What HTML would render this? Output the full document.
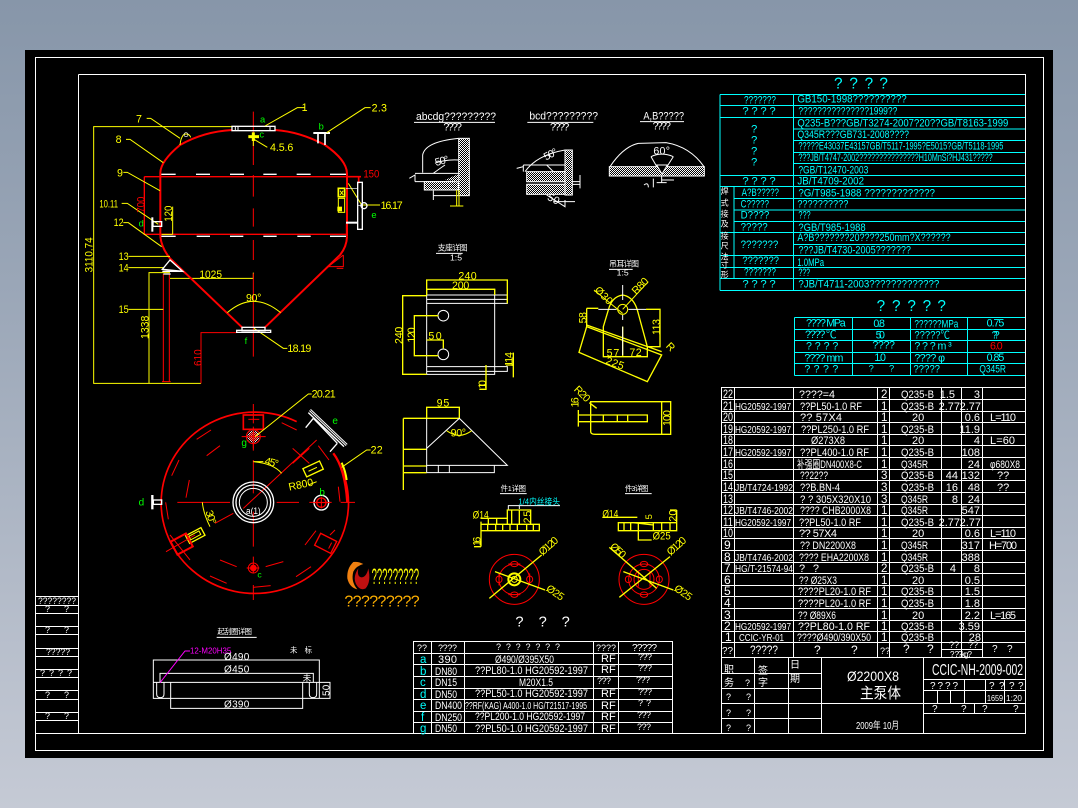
<!DOCTYPE html>
<html><head><meta charset="utf-8"><style>
html,body{margin:0;padding:0;width:1078px;height:808px;overflow:hidden;background:linear-gradient(180deg,#8796a9 0%,#9aa6b7 35%,#c5cad5 100%)}
svg{position:absolute;left:0;top:0}
text{font-family:"Liberation Sans","Noto Sans CJK SC",sans-serif;stroke:none}
.l{fill:none;shape-rendering:crispEdges}
.W{stroke:#fff}.Y{stroke:#ff0}.R{stroke:#f00}.C{stroke:#0ff}.M{stroke:#f0f}
.tw{fill:#fff}.ty{fill:#ff0}.tr{fill:#f00}.tc{fill:#0ff}.tg{fill:#0f0}.tm{fill:#f0f}.to{fill:#ffb000}
.z{stroke-width:3}
.t{font-size:11px}
</style></head><body>
<svg width="1078" height="808" viewBox="0 0 1078 808" xmlns="http://www.w3.org/2000/svg">
<defs>
<pattern id="h" patternUnits="userSpaceOnUse" width="6" height="6"><rect width="6" height="6" fill="#000"/><rect width="3" height="3" fill="#fff"/><rect x="3" y="3" width="3" height="3" fill="#fff"/></pattern>
</defs>
<rect x="25" y="50" width="1028" height="708" fill="#000"/>
<!-- frames -->
<g class="l W" stroke-width="1">
<rect x="35.5" y="57.5" width="1008" height="693"/>
<path d="M78.5 74.5H1025.5V733.5H35.5M78.5 74.5V733.5"/>
<path d="M36 596.5H78M36 605.5H78M36 613.5H78M36 626.5H78M36 634.5H78M36 648.5H78M36 656.5H78M36 669.5H78M36 677.5H78M36 690.5H78M36 699.5H78M36 712.5H78M36 720.5H78"/>
</g>
<g class="tw" font-size="9">
<text x="38" y="604" textLength="38" lengthAdjust="spacingAndGlyphs">????????</text>
<text x="45" y="612">?</text><text x="64" y="612">?</text>
<text x="45" y="633">?</text><text x="64" y="633">?</text>
<text x="46" y="655" textLength="24" lengthAdjust="spacingAndGlyphs">?????</text>
<text x="40" y="676" textLength="32" lengthAdjust="spacing">????</text>
<text x="45" y="698">?</text><text x="64" y="698">?</text>
<text x="45" y="719">?</text><text x="64" y="719">?</text>
</g>

<!-- Main vessel : zoom 1 coords -->
<g transform="translate(0,40) scale(.33333)">
<g class="z" fill="none">
<path class="Y" d="M696 260H281V1030H603M447 1030V698H510M510 715H760V698" />
<path class="R" stroke-width="6" d="M481 590V400Q480 365 540 315Q610 275 696 270M825 270Q900 275 975 315Q1040 360 1041 400V590"/>
<path class="R" stroke-width="6" d="M481 590Q485 625 510 655L726 862M1041 590Q1040 620 1020 645L795 862"/>
<path class="R" stroke-width="4" d="M433 410H1040M433 410V583H1040M481 410V583M1040 410V583"/>
<path class="R" d="M1040 410H1083M1076 410V430M1040 550V583" stroke-width="5"/>
<path class="R" d="M760 215V375M760 405V470M760 505V560M760 600V660M760 700V950"/>
<path class="R" d="M490 702V1025M508 702V1025M486 1025H512M603 1030V878H710"/>
<path class="W" stroke-width="4" d="M484 403H527M588 403H630M690 403H732M790 403H830M890 403H932M990 403H1038M484 589H527M590 589H630M690 589H730M790 589H830M892 589H932M990 589H1038"/>
<rect class="W" x="696" y="259" width="129" height="13" stroke-width="4"/>
<path class="W" d="M706 260V272M714 260V272M810 260V272"/>
<path class="W" stroke-width="6" d="M940 279H990"/><path class="W" stroke-width="5" d="M954 279V310M975 279V315"/>
<path stroke="#ff0" d="M440 235H452L540 295M378 298H390L490 368M370 397H382L480 452M365 490H382L475 553M370 548H385L485 620M385 649H510M385 683H490M385 808H490"/>
<path class="Y" d="M795 258L892 203H915M980 278L1095 203H1112M762 298L802 322M762 865L850 925H862M1045 430L1085 495H1140"/>
<path class="Y" stroke-width="9" d="M745 290H777"/><path class="Y" stroke-width="9" d="M760 277V303"/><path class="Y" d="M760 303V318"/>
<path class="Y" d="M540 315Q542 295 550 285A14 14 0 0 1 572 292"/><circle class="W" cx="558" cy="284" r="6" stroke-width="2"/>
<path class="W" stroke-width="4" d="M510 660L487 688L548 694Z"/>
<path class="W" stroke-width="4" d="M487 694H548M490 702H512"/>
<path class="R" d="M1030 645L985 680H1030V645M1010 685H1030"/>
<path class="Y" d="M682 818Q760 750 842 818"/>
<rect class="W" x="726" y="862" width="69" height="10" stroke-width="4"/>
<rect class="W" x="710" y="871" width="102" height="6" stroke-width="4"/>
<rect class="W" x="1073" y="427" width="14" height="141" stroke-width="4"/>
<path class="W" stroke-width="2" d="M1073 497H1087M1038 445H1073"/>
<path class="W" stroke-width="6" d="M1038 548H1073"/>
<circle class="W" cx="1092" cy="497" r="9" stroke-width="4"/>
<rect class="Y" x="1015" y="445" width="19" height="25" stroke-width="5"/>
<path class="Y" d="M1020 452L1030 465M1030 452L1020 465" stroke-width="3"/>
<rect class="Y" x="1015" y="475" width="19" height="42" stroke-width="3"/>
<rect x="1012" y="500" width="14" height="14" fill="#ff0" stroke="none"/>
<rect class="W" x="459" y="545" width="26" height="14" stroke-width="4"/>
<path class="W" stroke-width="6" d="M457 532V575"/>
<path class="Y" d="M518 500V583M485 583H518"/>
</g>
<g class="ty" font-size="32">
<text x="408" y="247">7</text><text x="347" y="309">8</text><text x="351" y="409">9</text>
<text x="298" y="503" textLength="56" lengthAdjust="spacingAndGlyphs">10.11</text><text x="341" y="558" textLength="30" lengthAdjust="spacingAndGlyphs">12</text>
<text x="356" y="660" textLength="30" lengthAdjust="spacingAndGlyphs">13</text><text x="356" y="694" textLength="30" lengthAdjust="spacingAndGlyphs">14</text><text x="356" y="819" textLength="30" lengthAdjust="spacingAndGlyphs">15</text>
<text x="905" y="213">1</text><text x="1115" y="214" textLength="46">2.3</text><text x="810" y="333" textLength="70">4.5.6</text>
<text x="1142" y="507" textLength="66">16.17</text><text x="598" y="714" textLength="68" lengthAdjust="spacingAndGlyphs">1025</text>
<text x="738" y="784" textLength="46">90°</text><text x="862" y="936" textLength="72">18.19</text>
<text transform="translate(278,697) rotate(-90)" textLength="105" lengthAdjust="spacingAndGlyphs">3110.74</text>
<text transform="translate(445,897) rotate(-90)" textLength="70" lengthAdjust="spacingAndGlyphs">1338</text>
<text transform="translate(516,545) rotate(-90)" textLength="48" lengthAdjust="spacingAndGlyphs">120</text>
</g>
<g class="tr" font-size="32">
<text x="1090" y="412" textLength="48" lengthAdjust="spacingAndGlyphs">150</text>
<text transform="translate(604,978) rotate(-90)" textLength="50" lengthAdjust="spacingAndGlyphs">610</text>
<text transform="translate(434,518) rotate(-90)" textLength="48" lengthAdjust="spacingAndGlyphs">700</text>
</g>
<g class="tg" font-size="28">
<text x="780" y="248">a</text><text x="956" y="268">b</text><text x="778" y="292">c</text><text x="416" y="560">d</text><text x="1114" y="534">e</text><text x="734" y="912">f</text>
</g>
</g>

<!-- Top view : zoom 2 coords -->
<g transform="translate(100,380) scale(.33333)">
<g class="z" fill="none">
<path class="R" stroke-width="5" d="M590 125A281 272 0 1 0 700 220" />
<path class="R" stroke-width="7" d="M700 220Q735 265 742 367"/>
<path class="R" d="M232 367H390M530 367H597M628 367H695M722 367H765M460 72V130M460 180V212M460 240V340M460 395V500M460 530V580M460 615V660"/>
<path class="R" d="M290 178L333 150M320 227L360 197M215 287L237 240M258 353L268 300M197 367L205 418M360 540L410 560M330 588L380 610M497 560L550 545M588 590L633 560M615 495L648 452M690 465L705 450M715 320L720 365M655 197L687 240M545 128L590 150M578 205L628 250M628 205L578 250M460 622L512 617M345 430L400 400M430 385L650 180"/>
<rect class="R" x="430" y="105" width="60" height="43" stroke-width="5"/>
<path class="R" d="M445 118H478"/>
<circle class="R" cx="460" cy="170" r="21" stroke-width="3"/>
<circle cx="460" cy="170" r="18" fill="url(#h)" stroke="none" opacity=".9"/>
<circle cx="460" cy="170" r="14" fill="#f00" opacity=".55" stroke="none"/>
<path class="R" d="M425 170H497M460 140V205"/>
<path class="Y" d="M465 170L625 42H635M725 262L800 210H812M460 245H490M460 245Q520 250 545 280M307 367Q310 400 330 440M625 315L650 305"/>
<path class="Y" stroke-width="6" d="M725 248Q737 275 740 300"/>
<g transform="rotate(-25 640 267)"><rect class="Y" x="612" y="253" width="55" height="27" stroke-width="4"/><path class="Y" d="M624 267H652"/></g>
<g transform="rotate(-28 285 467)"><rect class="Y" x="260" y="454" width="52" height="26" stroke-width="4"/><rect class="Y" x="268" y="460" width="34" height="12"/></g>
<g transform="rotate(-28 245 490)"><rect class="R" x="218" y="470" width="52" height="44" stroke-width="6"/></g>
<path class="R" d="M198 515L285 465M210 465L270 540"/>
<g transform="rotate(27 677 490)"><rect class="R" x="650" y="470" width="54" height="40" stroke-width="4"/><path class="R" d="M692 480V500"/></g>
<circle class="W" cx="460" cy="367" r="61" stroke-width="4"/><circle class="W" cx="460" cy="367" r="52" stroke-width="4"/><circle class="W" cx="460" cy="367" r="42" stroke-width="3"/>
<circle class="W" cx="664" cy="368" r="22" stroke-width="4"/><circle class="R" cx="664" cy="368" r="14" stroke-width="4"/><path class="R" d="M640 368H690M664 350V385"/>
<circle class="R" cx="460" cy="564" r="15" stroke-width="3"/><circle cx="460" cy="564" r="10" fill="#f00" stroke="none"/><path class="R" d="M440 564H478"/>
<path class="W" stroke-width="7" d="M157 345V388"/><rect class="W" x="160" y="360" width="25" height="13" stroke-width="4"/>
<path class="W" stroke-width="4" d="M617 143L640 115M690 215L712 190"/>
<path class="W" stroke-width="4" d="M640 115L712 190M625 98L732 200"/>
<path class="W" stroke-width="8" d="M630 90L740 195"/>
<path stroke="#000" stroke-width="2" d="M630 90L740 195"/>
</g>
<text x="438" y="402" class="tw" font-size="27" textLength="44" lengthAdjust="spacingAndGlyphs">a(1)</text>
<g class="ty" font-size="32">
<text x="635" y="53" textLength="72">20.21</text><text x="812" y="221" textLength="36">22</text>
<text transform="translate(492,252) rotate(15)" textLength="42">45°</text>
<text transform="translate(568,332) rotate(-12)" textLength="75" lengthAdjust="spacingAndGlyphs">R800</text>
<text transform="translate(316,395) rotate(72)" textLength="42">30°</text>
</g>
<g class="tg" font-size="30"><text x="424" y="198">g</text><text x="697" y="132">e</text><text x="658" y="347">b</text><text x="116" y="377">d</text><text x="472" y="592" font-size="26">c</text></g>
<path d="M760 546Q740 565 742 595Q748 622 772 628Q752 605 760 575Q768 558 790 552Q775 544 760 546Z" fill="#f08010"/>
<path d="M805 565Q800 590 785 592Q770 590 775 565Q758 590 768 612Q780 634 797 625Q814 605 805 565Z" fill="#c01010"/>
<text x="815" y="612" class="ty" font-size="66" textLength="142" lengthAdjust="spacingAndGlyphs">?????????</text>
<text x="733" y="680" class="to" font-size="48" textLength="226" lengthAdjust="spacing">?????????</text>
</g>

<!-- Details : zoom 3 coords -->
<g transform="translate(390,100) scale(.33333)">
<g class="z" fill="none">
<path class="W" d="M72 67H315M412 67H610M750 65H882M138 460H218M657 508H728"/>
<path class="W" d="M98 218V165Q105 125 205 115M75 220H205M75 245H205M58 235L75 225V245M130 220Q150 205 165 195M135 190Q165 178 205 180M130 272V300M130 287H205"/>
<rect x="206" y="115" width="32" height="172" fill="url(#h)" stroke="#fff"/>
<rect x="103" y="245" width="102" height="25" fill="url(#h)" stroke="#fff"/>
<path d="M165 240L205 222V245Z" fill="url(#h)"/>
<path class="Y" d="M200 270V318M207 270V318M180 318H220"/>
<path class="W" d="M405 215Q440 165 525 150M400 195V215M380 205L400 200M400 195H525M410 245H570M410 253H570M570 225V265M470 195L490 215H525M470 285L525 320V300M490 305H555"/>
<rect x="525" y="150" width="22" height="135" fill="url(#h)" stroke="#fff"/>
<rect x="410" y="215" width="115" height="30" fill="url(#h)" stroke="#fff"/>
<rect x="410" y="253" width="115" height="30" fill="url(#h)" stroke="#fff"/>
<path class="W" d="M660 200Q700 140 745 130L828 128Q900 140 942 200M783 170L815 225L850 170M783 170Q815 155 850 170M815 228V248M800 248H830M815 240H852M762 255Q775 245 775 262M790 236V262"/>
<rect x="658" y="200" width="285" height="28" fill="url(#h)" stroke="#fff"/>
<path d="M800 195H832L816 222Z" fill="#000" stroke="#fff"/>
<!-- support -->
<path class="W" d="M110 568H314V823H110ZM110 585H352V610H110M110 598H352M110 800H352V814H110M110 814H314"/>
<circle class="W" cx="160" cy="647" r="16"/><circle class="W" cx="160" cy="763" r="16"/>
<path class="Y" stroke-width="4" d="M110 585V540H352V610M110 568H314V585M110 587H38V823H110M145 647H73V767H145M110 720H160V745M370 758V832M350 795H370M288 795V868M268 868H290"/>
<!-- lug -->
<path class="Y" stroke-width="4" d="M640 770V680L655 630Q665 590 698 585Q730 590 742 630L772 740V770ZM590 680L815 765L772 845L567 757ZM590 625H625M590 625V680M768 628H810V740H770M590 675L815 755M698 680V770M640 770H772"/>
<circle class="Y" cx="698" cy="628" r="15" stroke-width="3"/>
<path class="Y" d="M612 570L698 640M775 545L698 628"/>
<path class="W" d="M698 555V600M698 645V660M698 680V765M625 628H680M715 628H768"/>
</g>
<g class="tw" font-size="32">
<text x="78" y="60" textLength="240" lengthAdjust="spacingAndGlyphs">abcdg?????????</text><text x="160" y="92" textLength="56">????</text>
<text x="418" y="59" textLength="206" lengthAdjust="spacingAndGlyphs">bcd?????????</text><text x="480" y="92" textLength="58">????</text>
<text x="760" y="59" textLength="122" lengthAdjust="spacingAndGlyphs">A,B?????</text><text x="788" y="88" textLength="55">????</text>
<text transform="translate(138,198) rotate(-15)" textLength="42">50°</text>
<text transform="translate(468,182) rotate(-28)" textLength="42">50°</text>
<text transform="translate(470,298) rotate(28)" textLength="36">50</text>
<text x="790" y="163" textLength="50">60°</text>
<text x="143" y="452" font-size="24" textLength="90">支座详图</text><text x="180" y="482" font-size="26">1:5</text>
<text x="657" y="500" font-size="24" textLength="90">吊耳详图</text><text x="680" y="526" font-size="26">1:5</text>
</g>
<g class="ty" font-size="32">
<text x="205" y="538" textLength="55">240</text><text x="186" y="567" textLength="52">200</text><text x="115" y="719" textLength="40">50</text>
<text transform="translate(38,732) rotate(-90)" textLength="52">240</text><text transform="translate(75,728) rotate(-90)" textLength="46">120</text>
<text transform="translate(368,800) rotate(-90)" textLength="44">114</text><text transform="translate(288,866) rotate(-90)" textLength="26">10</text>
<text x="650" y="769" textLength="38">57</text><text x="718" y="768" textLength="37">72</text>
<text transform="translate(645,790) rotate(20)" textLength="56">225</text>
<text transform="translate(590,670) rotate(-90)" textLength="34">58</text><text transform="translate(810,705) rotate(-90)" textLength="48">113</text>
<text transform="translate(612,572) rotate(45)" textLength="62">Ø30</text><text transform="translate(738,585) rotate(-45)" textLength="56">R80</text>
<text transform="translate(826,740) rotate(45)">R</text>
<text transform="translate(550,870) rotate(45)" textLength="54">R20</text>
</g>
</g>

<!-- Lower details : zoom 7 coords -->
<g transform="translate(400,390) scale(.33333)">
<g class="z" fill="none">
<path class="Y" stroke-width="4" d="M80 85V52H178V85M10 85H178M10 178H80M10 228H80M10 248H80M10 85V300"/>
<path class="W" stroke-width="3" d="M80 85V248M80 175L178 85L322 226H80M80 248H283V226M115 226V248M148 226V248"/>
<path class="Y" d="M140 122Q178 150 215 122"/>
<path class="Y" stroke-width="4" d="M785 35H572Q572 35 572 125Q572 133 585 133H785Q785 133 785 35M785 35H812V133H785M535 75H742V95H535M535 60V110M610 75V95M652 75V95M683 75V95M568 38L590 55"/>
<!-- section A -->
<path class="W" d="M300 311H380M675 311H755M325 360V347H480M358 347V357"/>
<path class="Y" stroke-width="4" d="M243 403H418V422H243ZM243 385H322M243 395V470M222 470H243M322 403V360H392V403M358 360V403M335 360V403M263 403V422M287 403V422M308 403V422M330 403V422M352 403V422M380 403V422M400 403V422M265 385V403M290 385V403"/>
<circle class="R" cx="343" cy="568" r="75"/><circle class="R" cx="343" cy="568" r="46"/>
<ellipse class="R" cx="343" cy="522" rx="11" ry="8"/><ellipse class="R" cx="343" cy="614" rx="11" ry="8"/><ellipse class="R" cx="297" cy="568" rx="9" ry="10"/><ellipse class="R" cx="389" cy="568" rx="9" ry="10"/>
<path class="R" d="M325 522H361M325 614H361M297 550V586M389 550V586"/>
<circle class="Y" cx="343" cy="568" r="18" stroke-width="6"/><circle class="Y" cx="343" cy="568" r="9"/>
<path class="Y" stroke-width="4" d="M268 625L425 495M285 545L435 600"/>
<!-- section B -->
<path class="Y" stroke-width="4" d="M655 398H830V422H655ZM672 398V422M692 398V422M715 398V422M760 398V422M785 398V422M810 398V422M715 422V450H755M607 382H712M700 398L760 405M830 360V420M810 360H830"/>
<circle class="R" cx="732" cy="568" r="75"/><circle class="R" cx="732" cy="568" r="46"/><circle class="R" cx="732" cy="568" r="30"/>
<ellipse class="R" cx="732" cy="522" rx="11" ry="8"/><ellipse class="R" cx="732" cy="614" rx="11" ry="8"/><ellipse class="R" cx="685" cy="568" rx="9" ry="10"/><ellipse class="R" cx="778" cy="568" rx="9" ry="10"/>
<path class="R" d="M715 545V590M750 545V590"/>
<path class="Y" stroke-width="4" d="M658 622L810 500M628 472L770 595M670 545L820 600"/>
</g>
<g class="ty" font-size="32">
<text x="110" y="50" textLength="38">95</text><text x="152" y="139" textLength="46">90°</text>
<text transform="translate(811,108) rotate(-90)" textLength="48">100</text><text transform="translate(536,52) rotate(-90)" textLength="30">16</text>
<text x="218" y="385" textLength="48" lengthAdjust="spacingAndGlyphs">Ø14</text><text transform="translate(241,468) rotate(-90)" textLength="28">16</text>
<text transform="translate(393,400) rotate(-90)" textLength="38">25</text>
<text x="607" y="382" textLength="48" lengthAdjust="spacingAndGlyphs">Ø14</text><text x="758" y="449" textLength="54" lengthAdjust="spacingAndGlyphs">Ø25</text>
<text transform="translate(756,388) rotate(-90)" font-size="28">5</text><text transform="translate(830,395) rotate(-90)" textLength="36">20</text>
<text transform="translate(428,498) rotate(-42)" textLength="66">Ø120</text><text transform="translate(436,600) rotate(35)" textLength="58">Ø25</text>
<text transform="translate(812,498) rotate(-42)" textLength="66">Ø120</text><text transform="translate(628,472) rotate(42)" textLength="52">Ø50</text><text transform="translate(820,600) rotate(35)" textLength="58">Ø25</text>
</g>
<g class="tw" font-size="22"><text x="302" y="303" textLength="76">件1详图</text><text x="675" y="303" textLength="70">件3详图</text></g>
<text x="355" y="343" class="tc" font-size="26" textLength="125" lengthAdjust="spacingAndGlyphs">1/4内丝接头</text>
<g class="tw" font-size="44"><text x="346" y="710">?</text><text x="416" y="710">?</text><text x="485" y="710">?</text></g>
</g>

<!-- Lower-left flange : zoom 9 coords -->
<g transform="translate(20,570) scale(.33333)">
<g class="z" fill="none">
<path class="W" d="M590 202H710"/>
<path class="W" stroke-width="3" d="M400 270H898V385H400ZM420 337V310H880V337M400 337H930V385H898M452 337V415H848V337"/>
<path class="W" d="M410 337V372Q410 383 421 383Q432 383 432 372V337M868 337V372Q868 383 879 383Q890 383 890 372V337"/>
<path class="M" stroke-width="3" d="M420 338L495 243H510"/>
</g>
<text x="510" y="251" class="tm" font-size="24" textLength="124" lengthAdjust="spacingAndGlyphs">12-M20H35</text>
<g class="tw" font-size="30">
<text x="592" y="192" font-size="22" textLength="104">起刮圈详图</text>
<text x="612" y="270" textLength="76">Ø490</text><text x="612" y="308" textLength="76">Ø450</text><text x="612" y="413" textLength="76">Ø390</text>
<text transform="translate(929,378) rotate(-90)" textLength="34">50</text>
<text x="810" y="248" font-size="22" textLength="66">未标</text>
<text x="848" y="333" font-size="26">未</text>
</g>
</g>

<!-- Cyan spec table : zoom 4 coords -->
<g transform="translate(710,70) scale(.33333)">
<g class="z l C">
<path d="M30 73H945M30 107H945M30 143H945M250 177H945M250 212H945M250 247H945M250 281H945M30 316H945M30 350H945M72 385H945M72 420H945M72 455H945M30 488H945M250 523H945M30 557H945M30 592H945M30 626H945M30 661H945M30 73V661M250 73V661M72 350V626"/>
</g>
<g class="tc" font-size="34">
<text x="262" y="98" textLength="328" lengthAdjust="spacingAndGlyphs">GB150-1998??????????</text>
<text x="265" y="133" textLength="297" lengthAdjust="spacingAndGlyphs">???????????????1999??</text>
<text x="262" y="170" textLength="633" lengthAdjust="spacingAndGlyphs">Q235-B???GB/T3274-2007?20??GB/T8163-1999</text>
<text x="262" y="204" textLength="335" lengthAdjust="spacingAndGlyphs">Q345R???GB731-2008????</text>
<text x="265" y="238" textLength="615" lengthAdjust="spacingAndGlyphs">?????E43037E43157GB/T5117-1995?E5015?GB/T5118-1995</text>
<text x="265" y="273" textLength="583" lengthAdjust="spacingAndGlyphs">???JB/T4747-2002???????????????H10MnSi?HJ431?????</text>
<text x="265" y="311" textLength="210" lengthAdjust="spacingAndGlyphs">?GB/T12470-2003</text>
<text x="262" y="344" textLength="200" lengthAdjust="spacingAndGlyphs">JB/T4709-2002</text>
<text x="265" y="379" textLength="410" lengthAdjust="spacingAndGlyphs">?G/T985-1988 ?????????????</text>
<text x="262" y="413" textLength="153" lengthAdjust="spacingAndGlyphs">??????????</text>
<text x="265" y="445" textLength="37" lengthAdjust="spacingAndGlyphs">???</text>
<text x="265" y="483" textLength="202" lengthAdjust="spacingAndGlyphs">?GB/T985-1988</text>
<text x="262" y="513" textLength="460" lengthAdjust="spacingAndGlyphs">A?B???????20????250mm?X??????</text>
<text x="265" y="551" textLength="338" lengthAdjust="spacingAndGlyphs">???JB/T4730-2005???????</text>
<text x="262" y="588" textLength="80" lengthAdjust="spacingAndGlyphs">1.0MPa</text>
<text x="265" y="618" textLength="35" lengthAdjust="spacingAndGlyphs">???</text>
<text x="265" y="653" textLength="423" lengthAdjust="spacingAndGlyphs">?JB/T4711-2003?????????????</text>
<text x="102" y="100" textLength="96" lengthAdjust="spacingAndGlyphs">???????</text>
<text x="97" y="134" textLength="100" lengthAdjust="spacing">????</text>
<text x="123" y="188">?</text><text x="123" y="221">?</text><text x="123" y="254">?</text><text x="123" y="287">?</text>
<text x="97" y="343" textLength="100" lengthAdjust="spacing">????</text>
<text x="95" y="378" textLength="112" lengthAdjust="spacingAndGlyphs">A?B?????</text>
<text x="92" y="413" textLength="85" lengthAdjust="spacingAndGlyphs">C?????</text>
<text x="92" y="446" textLength="86" lengthAdjust="spacingAndGlyphs">D????</text>
<text x="92" y="482" textLength="81" lengthAdjust="spacingAndGlyphs">?????</text>
<text x="92" y="534" textLength="113" lengthAdjust="spacingAndGlyphs">???????</text>
<text x="97" y="582" textLength="110" lengthAdjust="spacingAndGlyphs">???????</text>
<text x="102" y="616" textLength="96" lengthAdjust="spacingAndGlyphs">???????</text>
<text x="97" y="653" textLength="100" lengthAdjust="spacing">????</text>
<text x="372" y="55" font-size="46">?</text><text x="418" y="55" font-size="46">?</text><text x="464" y="55" font-size="46">?</text><text x="508" y="55" font-size="46">?</text>
</g>
<g class="tw" font-size="24">
<text x="32" y="372">焊</text><text x="32" y="406">式</text><text x="32" y="440">接</text><text x="32" y="470">及</text><text x="32" y="506">接</text><text x="32" y="535">尺</text><text x="32" y="568">法</text><text x="32" y="592">寸</text><text x="32" y="622">形</text>
</g>
</g>

<!-- Design params : zoom 5 coords -->
<g transform="translate(710,295) scale(.33333)">
<g class="z l C">
<path d="M253 68H945M253 103H945M253 137H945M253 172H945M253 206H945M253 241H945M253 68V241M428 68V241M601 68V241M773 68V241"/>
</g>
<g class="tc" font-size="32">
<text x="500" y="48" font-size="46">?</text><text x="546" y="48" font-size="46">?</text><text x="592" y="48" font-size="46">?</text><text x="638" y="48" font-size="46">?</text><text x="682" y="48" font-size="46">?</text>
<text x="288" y="95" textLength="119" lengthAdjust="spacing">???? MPa</text><text x="490" y="96" textLength="35">0.8</text><text x="613" y="98" textLength="132" lengthAdjust="spacingAndGlyphs">??????MPa</text><text x="830" y="95" textLength="53">0.75</text>
<text x="285" y="129" textLength="95" lengthAdjust="spacing">???? ℃</text><text x="497" y="131" textLength="28">50</text><text x="613" y="131" textLength="107" lengthAdjust="spacingAndGlyphs">?????℃</text><text x="845" y="131" textLength="24">??</text>
<text x="288" y="163" textLength="97" lengthAdjust="spacing">????</text><text x="487" y="161" textLength="68">????</text><text x="613" y="164" textLength="112" lengthAdjust="spacing">???m³</text><text x="840" y="164" class="tr" textLength="38">6.0</text>
<text x="283" y="199" textLength="117" lengthAdjust="spacing">???? mm</text><text x="493" y="198" textLength="35">1.0</text><text x="613" y="199" textLength="92" lengthAdjust="spacing">???? φ</text><text x="830" y="198" textLength="53">0.85</text>
<text x="283" y="233" textLength="102" lengthAdjust="spacing">????</text><text x="476" y="229" font-size="28">?</text><text x="537" y="229" font-size="28">?</text><text x="610" y="233" textLength="80" lengthAdjust="spacingAndGlyphs">?????</text><text x="808" y="233" textLength="80" lengthAdjust="spacingAndGlyphs">Q345R</text>
</g>
</g>

<!-- Parts table absolute -->
<g class="l W" stroke-width="1">
<path d="M721 387.5H1025M721 399.5H1025M721 411.5H1025M721 422.5H1025M721 434.5H1025M721 445.5H1025M721 457.5H1025M721 469.5H1025M721 480.5H1025M721 492.5H1025M721 504.5H1025M721 515.5H1025M721 527.5H1025M721 538.5H1025M721 550.5H1025M721 562.5H1025M721 573.5H1025M721 585.5H1025M721 596.5H1025M721 608.5H1025M721 620.5H1025M721 631.5H1025M721 642.5H1025M941 649.5H982M721 657.5H1025"/>
<path d="M721.5 387V733M734.5 387V657M793.5 387V657M877.5 387V657M889.5 387V657M941.5 387V657M961.5 387V657M982.5 387V657"/>
<path d="M721 673.5H822M721 688.5H822M721 703.5H822M721 718.5H822M754.5 657V733M788.5 657V733M821.5 657V733M923.5 657V733M822 703.5H1025M923 679.5H1025M923 690.5H1025M923 713.5H1025M964.5 679V703M937.5 690V703M950.5 690V703M985.5 679V703M1004.5 679V703M974.5 703V713"/>
</g>
<g class="tw" font-size="11">
<g font-size="12" lengthAdjust="spacingAndGlyphs">
<text x="723" y="398" textLength="10" lengthAdjust="spacingAndGlyphs">22</text><text x="723" y="410" textLength="10" lengthAdjust="spacingAndGlyphs">21</text><text x="723" y="421" textLength="10" lengthAdjust="spacingAndGlyphs">20</text><text x="723" y="433" textLength="10" lengthAdjust="spacingAndGlyphs">19</text><text x="723" y="444" textLength="10" lengthAdjust="spacingAndGlyphs">18</text><text x="723" y="456" textLength="10" lengthAdjust="spacingAndGlyphs">17</text><text x="723" y="468" textLength="10" lengthAdjust="spacingAndGlyphs">16</text><text x="723" y="479" textLength="10" lengthAdjust="spacingAndGlyphs">15</text><text x="723" y="491" textLength="10" lengthAdjust="spacingAndGlyphs">14</text><text x="723" y="503" textLength="10" lengthAdjust="spacingAndGlyphs">13</text><text x="723" y="514" textLength="10" lengthAdjust="spacingAndGlyphs">12</text><text x="723" y="526" textLength="10" lengthAdjust="spacingAndGlyphs">11</text><text x="723" y="537" textLength="10" lengthAdjust="spacingAndGlyphs">10</text><text x="724" y="549">9</text><text x="724" y="561">8</text><text x="724" y="572">7</text><text x="724" y="584">6</text><text x="724" y="595">5</text><text x="724" y="607">4</text><text x="724" y="619">3</text><text x="724" y="630">2</text><text x="725" y="641">1</text>
</g>
<g font-size="10">
<text x="735" y="410" textLength="56" lengthAdjust="spacingAndGlyphs">HG20592-1997</text>
<text x="735" y="433" textLength="56" lengthAdjust="spacingAndGlyphs">HG20592-1997</text>
<text x="735" y="456" textLength="56" lengthAdjust="spacingAndGlyphs">HG20592-1997</text>
<text x="735" y="491" textLength="58" lengthAdjust="spacingAndGlyphs">JB/T4724-1992</text>
<text x="735" y="514" textLength="58" lengthAdjust="spacingAndGlyphs">JB/T4746-2002</text>
<text x="735" y="526" textLength="56" lengthAdjust="spacingAndGlyphs">HG20592-1997</text>
<text x="735" y="561" textLength="58" lengthAdjust="spacingAndGlyphs">JB/T4746-2002</text>
<text x="735" y="572" textLength="58" lengthAdjust="spacingAndGlyphs">HG/T-21574-94</text>
<text x="735" y="630" textLength="56" lengthAdjust="spacingAndGlyphs">HG20592-1997</text>
<text x="739" y="641" textLength="45" lengthAdjust="spacingAndGlyphs">CCIC-YR-01</text>
</g>
<g font-size="11">
<text x="799" y="398" textLength="36" lengthAdjust="spacingAndGlyphs">????=4</text>
<text x="800" y="410" textLength="62" lengthAdjust="spacingAndGlyphs">??PL50-1.0 RF</text>
<text x="800" y="421" textLength="42">?? 57X4</text>
<text x="801" y="433" textLength="68" lengthAdjust="spacingAndGlyphs">??PL250-1.0 RF</text>
<text x="811" y="444" textLength="34" lengthAdjust="spacingAndGlyphs">Ø273X8</text>
<text x="800" y="456" textLength="69" lengthAdjust="spacingAndGlyphs">??PL400-1.0 RF</text>
<text x="797" y="468" textLength="65" lengthAdjust="spacingAndGlyphs">补强圈DN400X8-C</text>
<text x="800" y="479" textLength="28" lengthAdjust="spacingAndGlyphs">??22??</text>
<text x="800" y="491" textLength="40" lengthAdjust="spacingAndGlyphs">??B.BN-4</text>
<text x="800" y="503" textLength="71" lengthAdjust="spacingAndGlyphs">? ? 305X320X10</text>
<text x="800" y="514" textLength="71" lengthAdjust="spacingAndGlyphs">???? CHB2000X8</text>
<text x="799" y="526" textLength="62" lengthAdjust="spacingAndGlyphs">??PL50-1.0 RF</text>
<text x="799" y="537" textLength="38">?? 57X4</text>
<text x="800" y="549" textLength="56" lengthAdjust="spacingAndGlyphs">?? DN2200X8</text>
<text x="799" y="561" textLength="70" lengthAdjust="spacingAndGlyphs">???? EHA2200X8</text>
<text x="799" y="572" textLength="20" lengthAdjust="spacing">? ?</text>
<text x="799" y="584" textLength="38" lengthAdjust="spacingAndGlyphs">?? Ø25X3</text>
<text x="798" y="595" textLength="73" lengthAdjust="spacingAndGlyphs">????PL20-1.0 RF</text>
<text x="798" y="607" textLength="73" lengthAdjust="spacingAndGlyphs">????PL20-1.0 RF</text>
<text x="798" y="619" textLength="38" lengthAdjust="spacingAndGlyphs">?? Ø89X6</text>
<text x="798" y="630" textLength="72" lengthAdjust="spacingAndGlyphs">??PL80-1.0 RF</text>
<text x="797" y="641" textLength="74" lengthAdjust="spacingAndGlyphs">????Ø490/390X50</text>
</g>
<g font-size="11.5">
<text x="881" y="398">2</text><text x="881" y="410">1</text><text x="881" y="421">1</text><text x="881" y="433">1</text><text x="881" y="444">1</text><text x="881" y="456">1</text><text x="881" y="468">1</text><text x="881" y="479">3</text><text x="881" y="491">3</text><text x="881" y="503">3</text><text x="881" y="514">1</text><text x="881" y="526">1</text><text x="881" y="537">1</text><text x="881" y="549">1</text><text x="881" y="561">1</text><text x="881" y="572">2</text><text x="881" y="584">1</text><text x="881" y="595">1</text><text x="881" y="607">1</text><text x="881" y="619">1</text><text x="881" y="630">1</text><text x="881" y="641">1</text>
</g>
<g font-size="11" text-anchor="start">
<text x="901" y="398" textLength="33" lengthAdjust="spacingAndGlyphs">Q235-B</text><text x="901" y="410" textLength="33" lengthAdjust="spacingAndGlyphs">Q235-B</text><text x="912" y="421">20</text><text x="901" y="433" textLength="33" lengthAdjust="spacingAndGlyphs">Q235-B</text><text x="912" y="444">20</text><text x="901" y="456" textLength="33" lengthAdjust="spacingAndGlyphs">Q235-B</text><text x="901" y="468" textLength="27" lengthAdjust="spacingAndGlyphs">Q345R</text><text x="901" y="479" textLength="33" lengthAdjust="spacingAndGlyphs">Q235-B</text><text x="901" y="491" textLength="33" lengthAdjust="spacingAndGlyphs">Q235-B</text><text x="901" y="503" textLength="27" lengthAdjust="spacingAndGlyphs">Q345R</text><text x="901" y="514" textLength="27" lengthAdjust="spacingAndGlyphs">Q345R</text><text x="901" y="526" textLength="33" lengthAdjust="spacingAndGlyphs">Q235-B</text><text x="912" y="537">20</text><text x="901" y="549" textLength="27" lengthAdjust="spacingAndGlyphs">Q345R</text><text x="901" y="561" textLength="27" lengthAdjust="spacingAndGlyphs">Q345R</text><text x="901" y="572" textLength="33" lengthAdjust="spacingAndGlyphs">Q235-B</text><text x="912" y="584">20</text><text x="901" y="595" textLength="33" lengthAdjust="spacingAndGlyphs">Q235-B</text><text x="901" y="607" textLength="33" lengthAdjust="spacingAndGlyphs">Q235-B</text><text x="912" y="619">20</text><text x="901" y="630" textLength="33" lengthAdjust="spacingAndGlyphs">Q235-B</text><text x="901" y="641" textLength="33" lengthAdjust="spacingAndGlyphs">Q235-B</text>
</g>
<g font-size="11" text-anchor="end">
<text x="955" y="398">1.5</text><text x="960" y="410">2.77</text><text x="958" y="479">44</text><text x="958" y="491">16</text><text x="958" y="503">8</text><text x="960" y="526">2.77</text><text x="956" y="572">4</text>
<text x="980" y="398">3</text><text x="981" y="410">2.77</text><text x="980" y="421">0.6</text><text x="980" y="433">11.9</text><text x="980" y="444">4</text><text x="980" y="456">108</text><text x="980" y="468">24</text><text x="980" y="479">132</text><text x="980" y="491">48</text><text x="980" y="503">24</text><text x="980" y="514">547</text><text x="981" y="526">2.77</text><text x="980" y="537">0.6</text><text x="980" y="549">317</text><text x="980" y="561">388</text><text x="980" y="572">8</text><text x="980" y="584">0.5</text><text x="980" y="595">1.5</text><text x="980" y="607">1.8</text><text x="980" y="619">2.2</text><text x="980" y="630">3.59</text><text x="981" y="641">28</text>
</g>
<g font-size="11">
<text x="990" y="421" textLength="26">L=110</text><text x="990" y="444" textLength="25">L=60</text><text x="990" y="468" textLength="30" lengthAdjust="spacingAndGlyphs">φ680X8</text><text x="997" y="479">??</text><text x="997" y="491">??</text><text x="990" y="537" textLength="26">L=110</text><text x="989" y="549" textLength="28">H=700</text><text x="990" y="619" textLength="26">L=165</text>
</g>
<g font-size="12">
<text x="722" y="654" font-size="10">??</text><text x="750" y="654" textLength="28" lengthAdjust="spacingAndGlyphs">?????</text>
<text x="814" y="654">?</text><text x="851" y="654">?</text><text x="880" y="654" font-size="9">??</text>
<text x="903" y="653">?</text><text x="927" y="653">?</text><text x="949" y="648" font-size="9">??</text><text x="968" y="648" font-size="9">??</text><text x="950" y="657" font-size="8" textLength="22">? ??kg?</text>
<text x="992" y="652" font-size="10">?</text><text x="1007" y="652" font-size="10">?</text>
</g>
<!-- title block -->
<g font-size="9">
<text x="724" y="673" font-size="10">职</text><text x="724" y="686" font-size="10">务</text><text x="745" y="686">?</text><text x="758" y="674" font-size="10">签</text><text x="758" y="686" font-size="10">字</text><text x="790" y="668" font-size="10">日</text><text x="790" y="682" font-size="10">期</text>
<text x="726" y="700">?</text><text x="746" y="700">?</text><text x="726" y="716">?</text><text x="746" y="716">?</text><text x="726" y="731">?</text><text x="746" y="731">?</text>
</g>
<text x="847" y="681" font-size="14" textLength="52" lengthAdjust="spacingAndGlyphs">Ø2200X8</text>
<text x="860" y="698" font-size="15" textLength="41" lengthAdjust="spacingAndGlyphs">主泵体</text>
<text x="856" y="729" font-size="10" textLength="43" lengthAdjust="spacingAndGlyphs">2009年 10月</text>
<text x="932" y="675" font-size="16" textLength="91" lengthAdjust="spacingAndGlyphs">CCIC-NH-2009-002</text>
<text x="930" y="689" font-size="10" textLength="28" lengthAdjust="spacing">????</text>
<text x="989" y="689" font-size="10">?</text><text x="999" y="689" font-size="10">?</text><text x="1009" y="689" font-size="10">?</text><text x="1018" y="689" font-size="10">?</text>
<text x="987" y="701" font-size="8.5" textLength="16" lengthAdjust="spacingAndGlyphs">1659</text><text x="1006" y="701" font-size="8.5" textLength="16" lengthAdjust="spacingAndGlyphs">1:20</text>
<text x="932" y="712" font-size="10">?</text><text x="961" y="712" font-size="10">?</text><text x="982" y="712" font-size="10">?</text><text x="1013" y="712" font-size="10">?</text>
</g>

<!-- Nozzle table -->
<g class="l W" stroke-width="1">
<path d="M413 641.5H672M413 653.5H672M413 664.5H672M413 676.5H672M413 688.5H672M413 699.5H672M413 711.5H672M413 722.5H672M413.5 641V733M431.5 641V733M464.5 641V733M593.5 641V733M618.5 641V733M672.5 641V733"/>
</g>
<g class="tc" font-size="11.5"><text x="420" y="663">a</text><text x="420" y="675">b</text><text x="420" y="686">c</text><text x="420" y="698">d</text><text x="420" y="709">e</text><text x="421" y="721">f</text><text x="420" y="732">g</text></g>
<g class="tw" font-size="11">
<text x="417" y="651" font-size="9">??</text><text x="438" y="651" font-size="9" textLength="19">????</text><text x="496" y="650" font-size="9" textLength="64" lengthAdjust="spacing">???????</text><text x="596" y="651" font-size="9" textLength="20" lengthAdjust="spacingAndGlyphs">????</text><text x="632" y="651" font-size="10" textLength="25">?????</text>
<text x="438" y="663" textLength="19">390</text><text x="495" y="663" textLength="59" lengthAdjust="spacingAndGlyphs">Ø490/Ø395X50</text><text x="601" y="662">RF</text><text x="638" y="660" font-size="9" textLength="14">???</text>
<text x="435" y="675" textLength="22" lengthAdjust="spacingAndGlyphs">DN80</text><text x="475" y="674" textLength="113" lengthAdjust="spacingAndGlyphs">??PL80-1.0 HG20592-1997</text><text x="601" y="673">RF</text><text x="638" y="671" font-size="9" textLength="14">???</text>
<text x="435" y="686" textLength="22" lengthAdjust="spacingAndGlyphs">DN15</text><text x="519" y="686" textLength="34" lengthAdjust="spacingAndGlyphs">M20X1.5</text><text x="597" y="684" font-size="9" textLength="14">???</text><text x="636" y="683" font-size="9" textLength="14">???</text>
<text x="435" y="698" textLength="22" lengthAdjust="spacingAndGlyphs">DN50</text><text x="475" y="697" textLength="113" lengthAdjust="spacingAndGlyphs">??PL50-1.0 HG20592-1997</text><text x="601" y="697">RF</text><text x="638" y="695" font-size="9" textLength="14">???</text>
<text x="435" y="709" textLength="27" lengthAdjust="spacingAndGlyphs">DN400</text><text x="465" y="709" font-size="10" textLength="122" lengthAdjust="spacingAndGlyphs">??RF(KAG) A400-1.0 HG/T21517-1995</text><text x="601" y="709">RF</text><text x="638" y="706" font-size="9">?</text><text x="646" y="706" font-size="9">?</text>
<text x="435" y="721" textLength="27" lengthAdjust="spacingAndGlyphs">DN250</text><text x="475" y="720" textLength="110" lengthAdjust="spacingAndGlyphs">??PL200-1.0 HG20592-1997</text><text x="601" y="720">RF</text><text x="637" y="718" font-size="9" textLength="14">???</text>
<text x="435" y="732" textLength="22" lengthAdjust="spacingAndGlyphs">DN50</text><text x="475" y="732" textLength="113" lengthAdjust="spacingAndGlyphs">??PL50-1.0 HG20592-1997</text><text x="601" y="732">RF</text><text x="637" y="730" font-size="9" textLength="14">???</text>
</g>
</svg>
</body></html>
